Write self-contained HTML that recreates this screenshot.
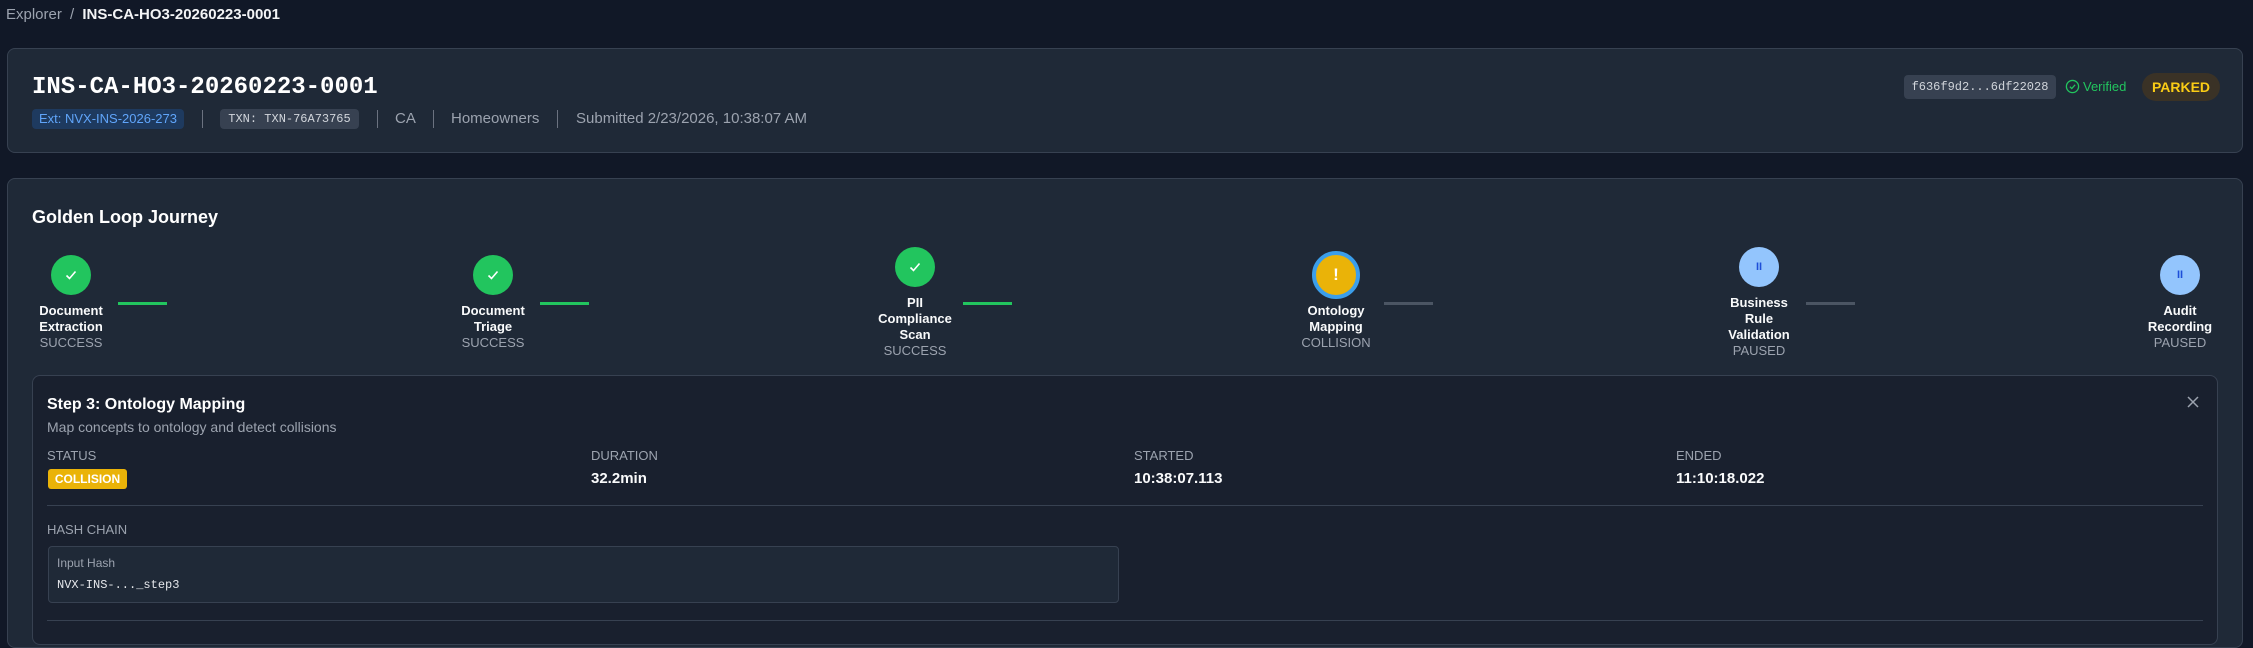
<!DOCTYPE html>
<html><head><meta charset="utf-8"><style>
*{box-sizing:border-box;margin:0;padding:0}
body{width:2253px;height:629px;overflow:hidden;background:#111827;font-family:"Liberation Sans",sans-serif;color:#f3f4f6;position:relative}
.a{position:absolute;white-space:nowrap}
.mono{font-family:"Liberation Mono",monospace}
.card{position:absolute;background:#1f2937;border:1px solid #374151;border-radius:8px}
.sep{position:absolute;width:1px;height:18px;background:#6b7280;top:110px}
.meta{top:109px;font-size:15px;color:#9ca3af;line-height:20px}
.circ{position:absolute;width:40px;height:40px;border-radius:50%;display:flex;align-items:center;justify-content:center}
.ok{background:#22c55e}
.pa{background:#93c5fd;color:#1d4ed8;font-size:11px;font-weight:bold}
.lbl{position:absolute;width:140px;text-align:center;font-size:13px;line-height:16px;font-weight:bold;color:#f9fafb}
.lbl span{display:block;font-weight:normal;color:#9ca3af}
.con{position:absolute;height:3px;top:302px;width:49px}
.h{position:absolute;font-size:13px;color:#9ca3af;top:448px}
.v{position:absolute;font-size:15px;font-weight:bold;color:#f9fafb;top:470px}
</style></head><body>
<div class="a" style="left:6px;top:5px;font-size:15px;line-height:20px;color:#9ca3af">Explorer <span style="margin:0 4px">/</span> <span style="color:#f3f4f6;font-weight:bold">INS-CA-HO3-20260223-0001</span></div>

<div class="card" style="left:7px;top:48px;width:2236px;height:105px"></div>
<div class="a mono" style="left:32px;top:72px;font-size:24px;font-weight:bold;line-height:32px;color:#fff">INS-CA-HO3-20260223-0001</div>
<div class="a" style="left:32px;top:109px;height:20px;width:152px;background:#1e3a5f;border-radius:4px;color:#60a5fa;font-size:13px;line-height:20px;text-align:center">Ext: NVX-INS-2026-273</div>
<div class="sep" style="left:202px"></div>
<div class="a mono" style="left:220px;top:109px;height:20px;width:139px;background:#374151;border-radius:4px;color:#d1d5db;font-size:12px;line-height:20px;text-align:center">TXN: TXN-76A73765</div>
<div class="sep" style="left:377px"></div>
<div class="a meta" style="left:395px">CA</div>
<div class="sep" style="left:433px"></div>
<div class="a meta" style="left:451px">Homeowners</div>
<div class="sep" style="left:557px"></div>
<div class="a meta" style="left:576px">Submitted 2/23/2026, 10:38:07 AM</div>

<div class="a mono" style="left:1904px;top:75px;width:152px;height:24px;background:#374151;border-radius:4px;color:#d1d5db;font-size:12px;line-height:24px;text-align:center">f636f9d2...6df22028</div>
<svg class="a" style="left:2065px;top:79px" width="15" height="15" viewBox="0 0 16 16"><circle cx="8" cy="8" r="6.5" fill="none" stroke="#22c55e" stroke-width="1.4"/><path d="M5.2 8.2l2 2 3.6-4" fill="none" stroke="#22c55e" stroke-width="1.4"/></svg>
<div class="a" style="left:2083px;top:78px;font-size:13px;line-height:18px;color:#22c55e">Verified</div>
<div class="a" style="left:2142px;top:73px;width:78px;height:28px;border-radius:14px;background:#3a3226;color:#facc15;font-size:14px;font-weight:bold;line-height:28px;text-align:center">PARKED</div>

<div class="card" style="left:7px;top:178px;width:2236px;height:470px"></div>
<div class="a" style="left:32px;top:205px;font-size:18px;font-weight:bold;line-height:24px;color:#fff">Golden Loop Journey</div>

<!-- steps -->
<div class="circ ok" style="left:51px;top:255px"><svg width="16" height="16" viewBox="0 0 16 16"><path d="M3.5 8.5l3 3 6-7" fill="none" stroke="#fff" stroke-width="1.6"/></svg></div>
<div class="lbl" style="left:1px;top:303px">Document<br>Extraction<span>SUCCESS</span></div>
<div class="con" style="left:118px;background:#22c55e"></div>

<div class="circ ok" style="left:473px;top:255px"><svg width="16" height="16" viewBox="0 0 16 16"><path d="M3.5 8.5l3 3 6-7" fill="none" stroke="#fff" stroke-width="1.6"/></svg></div>
<div class="lbl" style="left:423px;top:303px">Document<br>Triage<span>SUCCESS</span></div>
<div class="con" style="left:540px;background:#22c55e"></div>

<div class="circ ok" style="left:895px;top:247px"><svg width="16" height="16" viewBox="0 0 16 16"><path d="M3.5 8.5l3 3 6-7" fill="none" stroke="#fff" stroke-width="1.6"/></svg></div>
<div class="lbl" style="left:845px;top:295px">PII<br>Compliance<br>Scan<span>SUCCESS</span></div>
<div class="con" style="left:963px;background:#22c55e"></div>

<div class="circ" style="left:1312px;top:251px;width:48px;height:48px;background:#eab308;border:4px solid #3b9eea;color:#fff;font-size:17px;font-weight:bold">!</div>
<div class="lbl" style="left:1266px;top:303px">Ontology<br>Mapping<span>COLLISION</span></div>
<div class="con" style="left:1384px;background:#4b5563"></div>

<div class="circ pa" style="left:1739px;top:247px">II</div>
<div class="lbl" style="left:1689px;top:295px">Business<br>Rule<br>Validation<span>PAUSED</span></div>
<div class="con" style="left:1806px;background:#4b5563"></div>

<div class="circ pa" style="left:2160px;top:255px">II</div>
<div class="lbl" style="left:2110px;top:303px">Audit<br>Recording<span>PAUSED</span></div>

<!-- detail panel -->
<div class="a" style="left:32px;top:375px;width:2186px;height:270px;background:#19202e;border:1px solid #374151;border-radius:8px"></div>
<div class="a" style="left:47px;top:394px;font-size:16px;font-weight:bold;line-height:22px;color:#fff">Step 3: Ontology Mapping</div>
<div class="a" style="left:47px;top:417px;font-size:14px;line-height:20px;color:#9ca3af">Map concepts to ontology and detect collisions</div>
<svg class="a" style="left:2186px;top:395px" width="14" height="14" viewBox="0 0 14 14"><path d="M2 2l10 10M12 2L2 12" stroke="#9ca3af" stroke-width="1.5"/></svg>

<div class="h" style="left:47px">STATUS</div>
<div class="a" style="left:48px;top:469px;width:79px;height:20px;background:#eab308;border-radius:3px;color:#fff;font-size:12px;font-weight:bold;line-height:20px;text-align:center">COLLISION</div>
<div class="h" style="left:591px">DURATION</div>
<div class="v" style="left:591px">32.2min</div>
<div class="h" style="left:1134px">STARTED</div>
<div class="v" style="left:1134px">10:38:07.113</div>
<div class="h" style="left:1676px">ENDED</div>
<div class="v" style="left:1676px">11:10:18.022</div>

<div class="a" style="left:47px;top:505px;width:2156px;height:1px;background:#374151"></div>
<div class="h" style="left:47px;top:522px">HASH CHAIN</div>
<div class="a" style="left:48px;top:546px;width:1071px;height:57px;background:#1f2937;border:1px solid #374151;border-radius:4px"></div>
<div class="a" style="left:57px;top:555px;font-size:12px;line-height:16px;color:#9ca3af">Input Hash</div>
<div class="a mono" style="left:57px;top:577px;font-size:12px;line-height:16px;color:#e5e7eb">NVX-INS-..._step3</div>
<div class="a" style="left:47px;top:620px;width:2156px;height:1px;background:#374151"></div>
</body></html>
